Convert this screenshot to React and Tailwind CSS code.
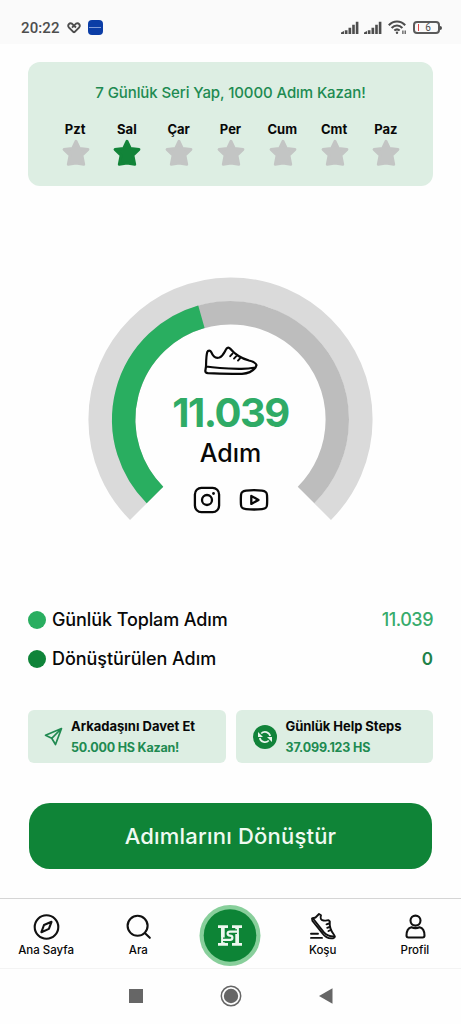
import React from 'react';

const days = [
    { label: 'Pzt', done: false },
    { label: 'Sal', done: true },
    { label: 'Çar', done: false },
    { label: 'Per', done: false },
    { label: 'Cum', done: false },
    { label: 'Cmt', done: false },
    { label: 'Paz', done: false },
];

const Signal = () => (
    <svg width="18" height="14" viewBox="0 0 18 14" fill="#4d4d4d">
        <path d="M0 13v-1.600l3-1.400v3zM3.800 9.200h2.700V13H3.800zM7.500 6.800h2.700V13H7.500zM11.200 3.800h2.600V13h-2.600zM14.800.8h2.600V13h-2.600z" />
    </svg>
);

const StatusBar = () => (
    <div className="flex h-11 items-center bg-[#fafafa] pl-[21px] pr-[19px] pt-[11px] font-['Roboto',sans-serif] text-[#4d4d4d]">
        <span className="text-[15px] font-medium leading-4 tracking-[0.1px]">20:22</span>
        <svg className="ml-[7px]" width="14" height="12" viewBox="0 0 14 12" fill="none" stroke="#4d4d4d" strokeWidth="1.900">
            <path d="M7 10.700 1.800 5.300C.2 3 2.500.3 5 1.700l4 3.800M5 5.700l4-4c2.500-1.400 4.800 1.300 3.200 3.600L7 10.700" />
        </svg>
        <div className="ml-[7px] flex h-[15px] w-[15px] items-center justify-center rounded-[4px] bg-[#0b3da6]">
            <div className="h-px w-3 bg-[#7f9bd8]" />
        </div>
        <div className="ml-auto flex items-center">
            <Signal />
            <div className="w-[5px]" />
            <Signal />
            <svg className="ml-[6px]" width="19" height="15" viewBox="0 0 19 15" fill="none" stroke="#4d4d4d" strokeWidth="2.100">
                <path d="M.8 5.200C5.500.3 12.500.3 17.200 5.200M3.600 8c3.200-3.200 7.600-3.200 10.800 0M6.300 10.600c1.600-1.500 3.800-1.500 5.400 0" />
                <circle cx="9" cy="12.800" r="1.200" fill="#4d4d4d" stroke="none" />
                <path d="M14.900 10.500v3.500M17.200 10.500v3.500" strokeWidth="1.200" />
            </svg>
            <div className="ml-[6px] flex h-[13px] w-[27px] items-center justify-center rounded-[4px] border-2 border-[#5a5a5a] text-[10px] leading-none">
                <span className="-ml-1 mr-[6px] h-[7px] w-px shrink-0 bg-[#e04545]" />
                <span>6</span>
            </div>
            <div className="h-1 w-[2px] rounded-r bg-[#4d4d4d]" />
        </div>
    </div>
);

const Star = ({ done }) => (
    <svg width="28" height="28" viewBox="0 0 28 28" className={done ? 'text-[#128439]' : 'text-[#c3c5c4]'}>
        <path
            d="M14 2.200 17.400 9.300 26 10.400 20 16.300 21.800 25.400 14 24.200 6.200 25.400 8 16.300 2 10.400 10.600 9.300Z"
            fill="currentColor"
            stroke="currentColor"
            strokeWidth="2.800"
            strokeLinejoin="round"
        />
    </svg>
);

const StreakCard = () => (
    <div className="mx-7 mt-[18px] h-[124px] rounded-xl bg-[#ddeee3] pt-5">
        <p className="text-center text-[15px] font-medium leading-[22px] tracking-[-0.1px] text-[#208a51]">
            7 Günlük Seri Yap, 10000 Adım Kazan!
        </p>
        <div className="ml-px mt-4 grid grid-cols-[repeat(7,51.800px)] justify-center">
            {days.map((day) => (
                <div key={day.label} className="flex flex-col items-center">
                    <span className="-ml-px text-[13px] font-bold leading-[19px]">{day.label}</span>
                    <Star done={day.done} />
                </div>
            ))}
        </div>
    </div>
);

// start and end are degrees, 0 is the top of the circle
const arc = (r, start, end) => {
    const point = (deg) => {
        const a = (deg * Math.PI) / 180;
        return `${142 + r * Math.sin(a)} ${142 - r * Math.cos(a)}`;
    };
    return `M${point(start)}A${r} ${r} 0 ${end - start > 180 ? 1 : 0} 1 ${point(end)}`;
};

const Sneaker = () => (
    <svg width="54" height="29" viewBox="0 0 54 29" fill="none" stroke="#080808" strokeWidth="2.200" strokeLinecap="round" strokeLinejoin="round">
        <path d="M2 20.500C2.200 16 2.100 10 3.200 6.200 4 4 6.300 4 7.300 6.200 9.200 11 12 12.700 15.500 11.500 19.500 10 20.500 5.500 22.500 2.700 23.500 1.200 25 1.200 26.300 2.700 31 8.500 37.500 12.300 45 14.500 49.500 15.700 52 17 52.500 19L51.500 21.500C46 22.500 40 23 35 22.800 24 22.500 12 22 2 20.500ZM2 20.500 1.300 25C1.300 26.500 2.300 27 4 27.200 14 27.800 26 28 38 27.800 43 27.500 48.500 25.500 51.500 21.500" />
        <path d="m26.200 10.200 2.300-2.600M30 12.600l2.300-2.400M34 14.600l2-2.300" strokeWidth="1.900" />
    </svg>
);

const Gauge = () => (
    <div className="mt-[91px] grid justify-center">
        <svg className="col-start-1 row-start-1" width="285" height="244" viewBox="-0.500 -0.500 285 244" fill="none">
            <path d={arc(130.2, -135, 135)} stroke="#dadada" strokeWidth="23.800" />
            <path d={arc(106.8, -135, 135)} stroke="#bdbdbd" strokeWidth="23.400" />
            <path d={arc(106.8, -135, -15.8)} stroke="#29ae60" strokeWidth="23.400" />
        </svg>
        <div className="col-start-1 row-start-1 flex flex-col items-center pt-[69px]">
            <Sneaker />
            <span className="mt-[14px] text-[40px] font-bold leading-[48px] tracking-[-1.500px] text-[#2fab66]">11.039</span>
            <span className="mt-px text-[25px] font-medium leading-[30px]">Adım</span>
            <div className="mt-[18px] flex items-center gap-[18px]">
                <svg width="28" height="28" viewBox="0 0 28 28" fill="none" stroke="#080808" strokeWidth="2.300">
                    <rect x="1.900" y="1.900" width="24.200" height="24.200" rx="6.500" />
                    <circle cx="14" cy="14" r="5" />
                    <circle cx="20.500" cy="7.500" r="1.400" fill="#080808" stroke="none" />
                </svg>
                <svg width="30" height="28" viewBox="0 0 30 28" fill="none" stroke="#080808" strokeWidth="2.300" strokeLinejoin="round">
                    <path d="M7 4.700C12 4.100 18 4.100 23 4.700 27 5.200 27.800 6.500 28 9 28.200 12 28.200 16 28 19 27.800 21.500 27 22.700 23 23.100 18 23.600 12 23.600 7 23.100 3 22.700 2.200 21.500 2 19 1.800 16 1.800 12 2 9 2.200 6.500 3 5.200 7 4.700Z" />
                    <path d="m12.300 9.900 7.200 4-7.200 4z" />
                </svg>
            </div>
        </div>
    </div>
);

const Totals = () => (
    <div className="mx-7 mt-[87px] flex flex-col gap-[15px] text-[18px] font-medium leading-6">
        <div className="flex items-center">
            <span className="mr-[6px] h-[18px] w-[18px] rounded-full bg-[#29ae60]" />
            <span className="tracking-[-0.100px]">Günlük Toplam Adım</span>
            <span className="ml-auto tracking-[-0.500px] text-[#37ab6c]">11.039</span>
        </div>
        <div className="flex items-center">
            <span className="mr-[6px] h-[18px] w-[18px] rounded-full bg-[#0f8439]" />
            <span className="tracking-[-0.050px]">Dönüştürülen Adım</span>
            <span className="ml-auto text-[17px] font-semibold text-[#208148]">0</span>
        </div>
    </div>
);

const InfoCards = () => (
    <div className="mx-7 mt-[39px] grid grid-cols-2 gap-[10px] text-[13px] font-bold leading-[21px]">
        <div className="flex h-[53px] items-center rounded-md bg-[#ddeee3] pl-4">
            <svg className="mr-2" width="19" height="19" viewBox="0 0 19 19" fill="none" stroke="#208a51" strokeWidth="1.700" strokeLinejoin="round">
                <path d="M17.500 1.500 1.500 8.200 7.700 11.300 11.500 17.500ZM17.500 1.500 7.700 11.300" />
            </svg>
            <div>
                <p>Arkadaşını Davet Et</p>
                <p className="text-[12.5px] tracking-[-0.200px] text-[#208a51]">50.000 HS Kazan!</p>
            </div>
        </div>
        <div className="flex h-[53px] items-center rounded-md bg-[#ddeee3] pl-[17px]">
            <svg className="mr-[9px]" width="24" height="24" viewBox="0 0 24 24" fill="none">
                <circle cx="12" cy="12" r="12" fill="#11833a" />
                <path d="M8.200 8.500A5.300 5.300 0 0 1 17.200 11M15.800 15.500A5.300 5.300 0 0 1 6.800 13" stroke="#e9f6ed" strokeWidth="1.700" />
                <path d="M5 7v5h5zM19 17v-5h-5z" fill="#e9f6ed" />
            </svg>
            <div>
                <p className="tracking-[-0.050px]">Günlük Help Steps</p>
                <p className="text-[12.5px] tracking-[-0.150px] text-[#208a51]">37.099.123 HS</p>
            </div>
        </div>
    </div>
);

const NavItem = ({ label, children }) => (
    <div className="flex flex-col items-center pt-[13px]">
        <svg width="30" height="30" viewBox="0 0 30 30" fill="none" stroke="#111" strokeWidth="2.100" strokeLinecap="round" strokeLinejoin="round">
            {children}
        </svg>
        <span className="text-[11.5px] font-medium leading-[17px]">{label}</span>
    </div>
);

const BottomNav = () => (
    <div className="mt-[29px] grid h-[71px] grid-cols-5 border-b border-t border-b-[#f3f3f3] border-t-[#d5d5d5]">
        <NavItem label="Ana Sayfa">
            <circle cx="15.500" cy="15" r="11.800" />
            <path d="m20.500 9.800-2.600 7.100-7.500 3.300 2.600-7.200z" />
        </NavItem>
        <NavItem label="Ara">
            <circle cx="14.600" cy="13.800" r="10" />
            <path d="m21.800 21 5 4.800" />
        </NavItem>
        <div className="flex justify-center pt-[6px]">
            <svg width="62" height="62" viewBox="0 0 62 62" fill="none">
                <circle cx="31" cy="30.500" r="30.500" fill="#88cf9b" />
                <circle cx="31" cy="30.500" r="26.300" fill="#0d8436" />
                <g stroke="#eef8f0">
                    <path d="M19 21.700h10M33 21.700h10M19 39.300h10M33 39.300h10" strokeWidth="2.700" />
                    <path d="M23.900 22v17M38.100 22v17" strokeWidth="3.600" />
                    <path d="M38 26.600h-7c-3.200 0-3.200 4 0 4s3.200 4.300 0 4.300h-7" stroke="#0d8436" strokeWidth="4.600" />
                    <path d="M38 26.600h-7c-3.200 0-3.200 4 0 4s3.200 4.300 0 4.300h-7" strokeWidth="2.200" />
                    <path d="M23.400 22v10M38.600 29.500v10" strokeWidth="2.600" />
                </g>
            </svg>
        </div>
        <NavItem label="Koşu">
            <g strokeWidth="1.900">
                <path d="M4 6.500 7.500 5.500 11 2l2 1.200c-1 3-.2 4.800 2.500 5.300 2 .4 3.400-.2 5-.3L21.800 9.500c-.5 5 .8 9 4 13 1.500 2 1.200 3.300-.5 3.700-4 .8-8-1-11-5L4.500 9Z" />
                <path d="M5 6.500 15.500 19.800c3 3.500 6.500 4.900 11 4.700M18.500 12.300l2.500-.8M19.200 15.800l2.300-.8M20.500 19l2.300-1M3 21.700h7M3 25.900h11" />
            </g>
        </NavItem>
        <NavItem label="Profil">
            <circle cx="15.500" cy="8.600" r="5" />
            <path d="M11.500 15.200C8 16 6.500 18.500 6.500 23.500c0 1.400.6 2 2 2h14c1.400 0 2-.6 2-2 0-5-1.500-7.500-5-8.300-2.500 1.200-5.500 1.200-8 0Z" />
        </NavItem>
    </div>
);

const SystemNav = () => (
    <div className="flex h-[55px] items-center justify-center pb-px">
        <div className="h-[14px] w-[14px] bg-[#666]" />
        <svg className="mx-[77px]" width="22" height="22" viewBox="0 0 22 22" fill="none">
            <circle cx="11" cy="11" r="9.700" stroke="#666" strokeWidth="1.500" />
            <circle cx="11" cy="11" r="7.200" fill="#666" />
        </svg>
        <svg width="14" height="16" viewBox="0 0 14 16" fill="#666">
            <path d="M0 8 13.500.3v15.400z" />
        </svg>
    </div>
);

const App = () => {
    return (
        <div className="flex h-[1024px] w-[461px] flex-col overflow-hidden bg-[#fefefe] font-['Inter','Liberation_Sans',sans-serif] text-[#080808]">
            <StatusBar />
            <StreakCard />
            <Gauge />
            <Totals />
            <InfoCards />
            <button className="mx-[29px] mt-10 h-[66px] rounded-[21px] bg-[#0f8437] text-[22px] font-medium tracking-[0.200px] text-[#effaf1]">
                Adımlarını Dönüştür
            </button>
            <BottomNav />
            <SystemNav />
        </div>
    );
};

export default App;
